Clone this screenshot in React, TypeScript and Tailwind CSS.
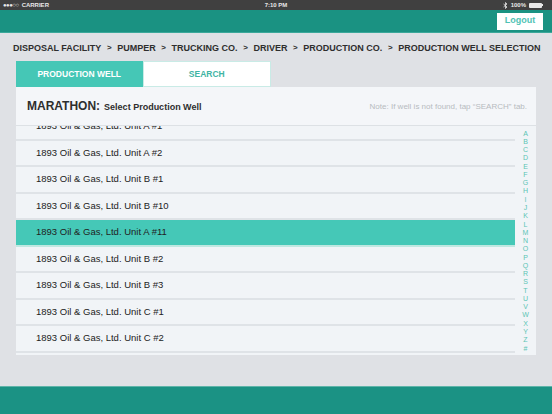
import React from "react";

const crumbs = [
  "DISPOSAL FACILITY",
  "PUMPER",
  "TRUCKING CO.",
  "DRIVER",
  "PRODUCTION CO.",
  "PRODUCTION WELL SELECTION",
];

const wells = [
  "1893 Oil & Gas, Ltd. Unit A #1",
  "1893 Oil & Gas, Ltd. Unit A #2",
  "1893 Oil & Gas, Ltd. Unit B #1",
  "1893 Oil & Gas, Ltd. Unit B #10",
  "1893 Oil & Gas, Ltd. Unit A #11",
  "1893 Oil & Gas, Ltd. Unit B #2",
  "1893 Oil & Gas, Ltd. Unit B #3",
  "1893 Oil & Gas, Ltd. Unit C #1",
  "1893 Oil & Gas, Ltd. Unit C #2",
];

const letters = "ABCDEFGHIJKLMNOPQRSTUVWXYZ#".split("");

function StatusBar() {
  return (
    <div className="relative flex h-[10px] items-center justify-between bg-[#404040] px-[3px] text-[6px] font-bold leading-none text-[#e8e8e8]">
      <div className="flex items-center gap-[3px]">
        <span className="tracking-[-0.5px]">●●●○○</span>
        <span>CARRIER</span>
      </div>
      <span className="absolute left-1/2 -translate-x-1/2">7:10 PM</span>
      <div className="flex items-center gap-[3px] pr-[6px]">
        <svg width="5" height="7" viewBox="0 0 5 7" fill="none" stroke="#e8e8e8" strokeWidth="0.8">
          <path d="M0.5 2 L4 5 L2.5 6.5 V0.5 L4 2 L0.5 5" />
        </svg>
        <span>100%</span>
        <div className="flex items-center">
          <div className="h-[5px] w-[13px] rounded-[1px] bg-[#e8e8e8]" />
          <div className="h-[2px] w-[1px] bg-[#e8e8e8]" />
        </div>
      </div>
    </div>
  );
}

export default function App() {
  return (
    <div
      className="flex h-[414px] w-[552px] flex-col overflow-hidden bg-[#dfe1e5]"
      style={{ fontFamily: '"Liberation Sans", Arial, sans-serif' }}
    >
      <StatusBar />
      <header className="flex h-[23px] items-center justify-end border-b border-[#3aa89a] bg-[#1a9282] pr-[9px]">
        <button className="flex h-[17px] w-[46px] items-center justify-center bg-white text-[9px] font-bold text-[#4fc2b4]">
          Logout
        </button>
      </header>

      <main className="flex-1 pt-[8px]">
        <nav className="ml-[13px] flex h-[14px] items-center whitespace-nowrap text-[9px] font-bold leading-none text-[#2e2e2e]">
          {crumbs.map((c, i) => (
            <React.Fragment key={c}>
              {i > 0 && <span className="mx-[5.6px] text-[8px]">&gt;</span>}
              <span>{c}</span>
            </React.Fragment>
          ))}
        </nav>

        <div className="ml-[16px] mt-[6px] flex h-[26px] w-[255px] text-[8.5px] font-bold">
          <div className="flex flex-1 items-center justify-center bg-[#45c7b6] text-white">
            PRODUCTION WELL
          </div>
          <div className="flex flex-1 items-center justify-center border border-[#c9ebe6] bg-white text-[#3fb4a4]">
            SEARCH
          </div>
        </div>

        <section className="ml-[16px] flex w-[520px] flex-col bg-[#f1f4f7]">
          <div className="flex h-[39px] items-center justify-between border-b border-[#dde1e5] bg-[#f4f6f9] pl-[11px] pr-[9px]">
            <div className="flex items-baseline gap-[4px] text-[#2e2e2e]">
              <span className="text-[12px] font-bold">MARATHON:</span>
              <span className="text-[9px] font-bold">Select Production Well</span>
            </div>
            <span className="pt-[2px] text-[8px] text-[#b7bbbf]">
              Note: If well is not found, tap “SEARCH” tab.
            </span>
          </div>

          <div className="flex h-[229px] overflow-hidden">
            <ul className="flex-1 overflow-hidden">
              <div className="-mt-[12px]">
                {wells.map((w, i) => (
                  <li
                    key={w}
                    className={`flex h-[26.5px] items-center border-b-2 pl-[20px] text-[9.5px] text-[#222] ${
                      i === 4 ? "border-[#bfe8e1] bg-[#45c8b7]" : "border-[#dfe3e7]"
                    }`}
                  >
                    {w}
                  </li>
                ))}
              </div>
            </ul>
            <div className="flex w-[21px] flex-col items-center pt-[3px]">
              {letters.map((l) => (
                <span
                  key={l}
                  className="flex h-[8.27px] items-center text-[7px] leading-none text-[#5cc4b5]"
                >
                  {l}
                </span>
              ))}
            </div>
          </div>
        </section>
      </main>

      <footer className="h-[28px] border-t border-[#5fb4a9] bg-[#1b9284]" />
    </div>
  );
}
